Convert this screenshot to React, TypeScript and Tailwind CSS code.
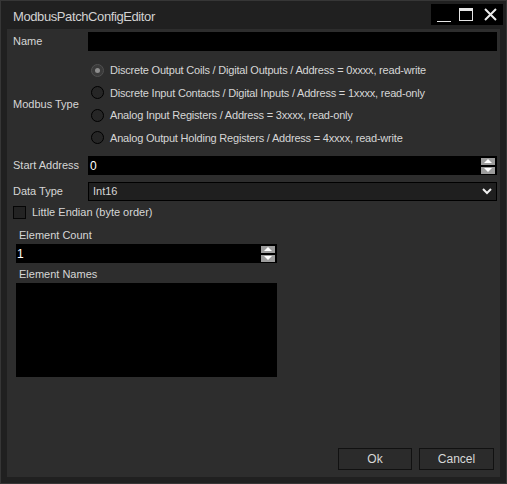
import React from "react";

const font = { fontFamily: '"Liberation Sans", Arial, sans-serif' };

const Spinner = () => (
  <div className="flex flex-col gap-[2px] mr-[2px]">
    <div className="w-[14px] h-[7px] bg-[#9c9c9c] flex items-center justify-center">
      <svg width="8" height="4" viewBox="0 0 8 4">
        <path d="M0 4 L4 0 L8 4 Z" fill="#ffffff" />
      </svg>
    </div>
    <div className="w-[14px] h-[7px] bg-[#9c9c9c] flex items-center justify-center">
      <svg width="8" height="4" viewBox="0 0 8 4">
        <path d="M0 0 L4 4 L8 0 Z" fill="#ffffff" />
      </svg>
    </div>
  </div>
);

const modbusTypes = [
  "Discrete Output Coils / Digital Outputs / Address = 0xxxx, read-write",
  "Discrete Input Contacts / Digital Inputs / Address = 1xxxx, read-only",
  "Analog Input Registers / Address = 3xxxx, read-only",
  "Analog Output Holding Registers / Address = 4xxxx, read-write",
];

const Radio = ({ label, checked }: { label: string; checked?: boolean }) => (
  <div className="h-[22.5px] flex items-center">
    <div
      className={`w-[13px] h-[13px] rounded-full border-[1.5px] flex items-center justify-center ${
        checked ? "bg-[#3a3a3a] border-[#505050]" : "bg-[#262626] border-[#000000]"
      }`}
    >
      {checked && <div className="w-[5px] h-[5px] rounded-full bg-[#8e8e8e]" />}
    </div>
    <span className="ml-[6px] tracking-[-0.2px]">{label}</span>
  </div>
);

export default function App() {
  return (
    <div
      className="w-[507px] h-[484px] bg-[#202020] border border-[#363636] flex flex-col text-[11px] text-[#d6d6d6]"
      style={font}
    >
      {/* title bar */}
      <div className="h-[28px] flex items-start justify-between">
        <span className="mt-[6px] ml-[12px] text-[13px] tracking-[-0.4px] text-[#d2d2d2]">
          ModbusPatchConfigEditor
        </span>
        <div className="mt-[3px] mr-[3px] w-[72px] h-[21px] bg-black flex items-center">
          <div className="ml-[6px] mt-[14px] w-[14px] h-[1px] bg-[#e6e6e6]" />
          <div className="ml-[8px] w-[14px] h-[13px] border border-[#e6e6e6] border-t-[3px]" />
          <svg className="ml-[11px]" width="13" height="13" viewBox="0 0 13 13">
            <path d="M1 1 L12 12 M12 1 L1 12" stroke="#ececec" strokeWidth="2" />
          </svg>
        </div>
      </div>

      {/* content */}
      <div className="mx-[6px] h-[448px] bg-[#2d2d2d] flex flex-col pt-[3px]">
        <div className="h-[19px] flex items-center">
          <span className="w-[81px] pl-[6px]">Name</span>
          <div className="flex-1 mr-[3px] h-full bg-black" />
        </div>

        <div className="mt-[8px] flex items-center">
          <span className="w-[84px] pl-[6px]">Modbus Type</span>
          <div className="flex flex-col">
            {modbusTypes.map((t, i) => (
              <Radio key={i} label={t} checked={i === 0} />
            ))}
          </div>
        </div>

        <div className="mt-[7px] h-[19px] flex items-center">
          <span className="w-[81px] pl-[6px]">Start Address</span>
          <div className="flex-1 mr-[3px] h-full bg-black flex items-center justify-between">
            <span className="ml-[2px] text-[12px] text-white">0</span>
            <Spinner />
          </div>
        </div>

        <div className="mt-[7px] h-[19px] flex items-center">
          <span className="w-[81px] pl-[6px]">Data Type</span>
          <div className="flex-1 mr-[3px] h-full bg-[#1f1f1f] border border-black flex items-center justify-between">
            <span className="ml-[4px]">Int16</span>
            <svg className="mr-[4px]" width="10" height="7" viewBox="0 0 10 7">
              <path d="M1 1 L5 5 L9 1" stroke="#f0f0f0" strokeWidth="2" fill="none" />
            </svg>
          </div>
        </div>

        <div className="mt-[5px] h-[12px] flex items-center pl-[6px]">
          <div className="w-[13px] h-[13px] bg-[#232323] border border-[#050505]" />
          <span className="ml-[6px]">Little Endian (byte order)</span>
        </div>

        <div className="ml-[9px] w-[261px] flex flex-col">
          <span className="mt-[9px] h-[16px] flex items-center pl-[3px]">Element Count</span>
          <div className="mt-[1px] h-[19px] bg-black flex items-center justify-between">
            <span className="ml-[1px] text-[12px] text-white">1</span>
            <Spinner />
          </div>
          <span className="mt-[3px] h-[16px] flex items-center pl-[3px]">Element Names</span>
          <div className="mt-[1px] h-[94px] bg-black" />
        </div>

        <div className="flex-1" />

        <div className="mb-[7px] mr-[6px] flex justify-end gap-[7px]">
          <button className="w-[74px] h-[22px] bg-[#2b2b2b] border border-[#111111] text-[12px] text-[#d8d8d8]">
            Ok
          </button>
          <button className="w-[75px] h-[22px] bg-[#2b2b2b] border border-[#111111] text-[12px] text-[#d8d8d8]">
            Cancel
          </button>
        </div>
      </div>
    </div>
  );
}
